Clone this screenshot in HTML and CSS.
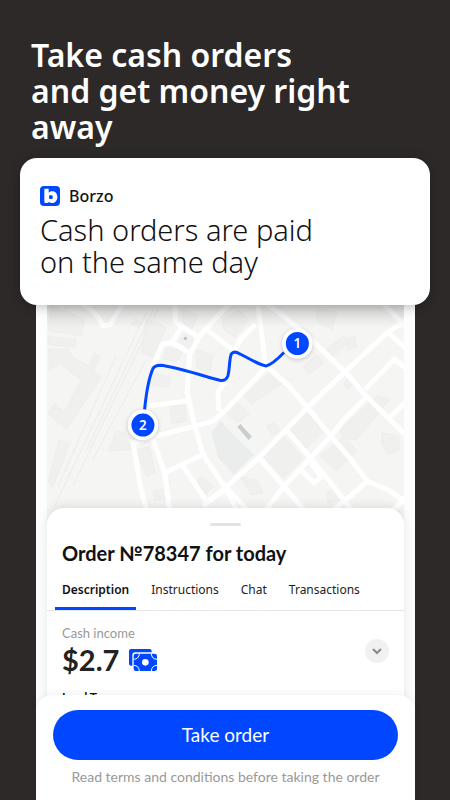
FILE: index.html
```
<!DOCTYPE html>
<html lang="en">
<head>
    <meta charset="UTF-8">
    <meta name="viewport" content="width=device-width, initial-scale=1.0">
    <title>Borzo</title>
    <link rel="stylesheet" href="styles.css">
</head>
<body>
<h1 class="headline">Take cash orders<br>and get money right<br>away</h1>

<section class="notice">
    <div class="notice-brand">
        <svg class="logo" viewBox="0 0 60 60" aria-hidden="true">
            <rect width="60" height="60" rx="12" fill="#0047ff"/>
            <path d="M13 8h13v12c3-3 7-4 11-4 9 0 15 7 15 17s-6 18-15 18c-4 0-7-1-10-4-2 3-5 4-9 4-3 0-5-1-5-4z" fill="#fff"/>
            <rect x="27" y="28" width="11" height="11" rx="3" fill="#0047ff"/>
        </svg>
        <span>Borzo</span>
    </div>
    <p class="notice-text">Cash orders are paid<br>on the same day</p>
</section>

<main class="phone">
    <svg class="map" viewBox="33 -45 1068 705" role="img" aria-label="Route from point 1 to point 2">
        <defs>
            <linearGradient id="shade" x1="0" y1="0" x2="0" y2="1">
                <stop offset="0" stop-color="#000" stop-opacity=".14"/>
                <stop offset="1" stop-color="#000" stop-opacity="0"/>
            </linearGradient>
        </defs>
        <rect x="33" y="-45" width="1068" height="705" fill="#f5f5f4"/>
        <!-- park -->
        <path d="M525 400l27-35 100 100-60 60-47-50z" fill="#eaedec"/>
        <!-- buildings -->
        <g fill="#f0f0ef" stroke="#ebebea" stroke-width="2">
            <path d="M45 20l100 40-8 50-100-16z"/>
            <path d="M36 112l84 8-4 24-80-8z"/>
            <path d="M36 150l60 0 10 20 50 30 20-40 16 14-20 40 24 20-106 156-55-48 20-30 30 26 50-96-64-50-30 20z"/>
            <path d="M330 60l60 24-40 90-36-12zM295 60l22 12-10 14-22-12z"/>
            <path d="M390 145l50 10-20 34-40-10zM480 150l50 20-10 50-40-14zM345 220l60 14-10 30-56-8zM400 320l44-4 8 50-44 8z"/>
            <path d="M300 450l40-10 16 80-26 10zM70 420l30 14-50 130-14-20zM240 395l26 6 20 50-70 4zM350 575l30-6 6 30-32 2zM490 530l40 30-20 24-30-30zM440 30l44 20-18 40-26-20z"/>
            <path d="M560 60l50-26 26 30-40 50-36-24zM840 30l60 10-14 50-44-20zM870 150l50-40 16 20-50 44zM925 120l30-10 4 34-26 8z"/>
            <path d="M570 340l34-30 34 34-34 26zM620 290l80-70 34 34-90 60zM800 200l40-34 22 24-46 36z"/>
            <path d="M690 380l20-10 20 24-22 14zM760 390l50-50 50 56-50 50zM680 470l60-60 60 66-60 60zM850 470l70-60 40 44-60 60z"/>
            <path d="M910 390l110-100 40 10-100 120-44-4zM1035 400l50 10 4 40-34 16-20-30zM610 530l50 10 20 40-36 6zM870 580l34-14 10 34-40 10zM920 250l20-14 14 20-22 14z"/>
        </g>
        <path d="M240 170L66 560M330 40L56 620M365 30L110 560M330 180L170 480M352 30l-200 420" fill="none" stroke="#ececeb" stroke-width="3"/>
        <path d="M602 382l10-8 34 38-10 10z" fill="#c9cecf"/>
        <path d="M435 105l30 0 12 32-24 18-32-12z" fill="#f0f1f0"/>
        <circle cx="447" cy="118" r="5" fill="#bcc4c8"/>
        <!-- streets -->
        <g class="streets">
            <path d="M90 -10Q180 25 200 80L222 76 262 10"/>
            <path d="M415 -10L418 70 480 110M435 85L408 130 378 135 350 200M408 130L458 160"/>
            <path d="M600 -10L490 110 460 165 452 280 475 380 500 465 570 570 610 650M510 90L592 155"/>
            <path d="M335 320L452 305M290 430L360 410 475 380 530 365 570 330 687 205M575 230L545 280 547 335"/>
            <path d="M290 425L310 550 335 650M350 420L385 520 402 650M385 520L500 465M440 500L510 605 570 570"/>
            <path d="M660 -10L672 80 687 200M660 -10L752 60 822 120 927 220 987 290 1110 410"/>
            <path d="M657 75L612 120 592 160M687 200L752 255 812 325 882 410 942 480 992 545 1052 570 1110 610"/>
            <path d="M1110 60L1052 100 927 215 812 325 662 480 572 560 500 620M1020 -5L1110 85M1052 100L1110 150M985 270L1072 180 1110 210"/>
            <path d="M992 290L922 360 882 410 817 480 742 560 680 640M1052 360L1110 305M752 395L817 470 882 550 950 640"/>
            <path d="M672 480L742 560 810 640M552 545L640 640M792 510L832 550 854 532 822 490M992 545L880 640M1110 590L1060 640"/>
        </g>
        <rect x="33" y="15" width="1068" height="70" fill="url(#shade)"/>
        <path class="route" d="M325 330C330 280 340 230 350 208Q356 198 372 198C420 202 490 228 550 243Q568 246 574 230C580 210 578 180 584 165Q590 156 602 160C630 172 660 195 688 200Q705 198 742 160"/>
        <g class="pin">
            <circle cx="782" cy="133" r="40"/>
            <text x="782" y="147">1</text>
        </g>
        <g class="pin">
            <circle cx="320" cy="377" r="40"/>
            <text x="320" y="391">2</text>
        </g>
    </svg>

    <section class="sheet">
        <div class="handle"></div>
        <h2 class="order-title">Order №78347 for today</h2>
        <nav class="tabs">
            <a class="tab active" href="#description">Description</a>
            <a class="tab" href="#instructions">Instructions</a>
            <a class="tab" href="#chat">Chat</a>
            <a class="tab" href="#transactions">Transactions</a>
        </nav>
        <div class="income" id="description">
            <div>
                <div class="income-label">Cash income</div>
                <div class="income-value">
                    <span>$2.7</span>
                    <svg class="cash" viewBox="0 0 84 66" aria-hidden="true">
                        <path d="M6 0h56a6 6 0 0 1 6 6v4H18a8 8 0 0 0-8 8v32H6a6 6 0 0 1-6-6V6a6 6 0 0 1 6-6z" fill="#0047ff"/>
                        <rect x="14" y="14" width="70" height="52" rx="7" fill="#0047ff"/>
                        <circle cx="49" cy="40" r="10" fill="#fff"/>
                        <path d="M14 31c10 0 17-7 17-17M84 31c-10 0-17-7-17-17M14 49c10 0 17 7 17 17M84 49c-10 0-17 7-17 17" fill="none" stroke="#fff" stroke-width="3"/>
                    </svg>
                </div>
            </div>
            <button class="expand" type="button" aria-label="Show details">
                <svg viewBox="0 0 24 24" aria-hidden="true"><path d="M8 10l4 4 4-4"/></svg>
            </button>
        </div>
        <div class="next-row">Lead T</div>
    </section>

    <footer class="action">
        <button class="take" type="button">Take order</button>
        <p class="terms">Read terms and conditions before taking the order</p>
    </footer>
</main>
</body>
</html>
```

FILE: styles.css
```
* {
    box-sizing: border-box;
}
body {
    display: flex;
    flex-direction: column;
    min-height: 100vh;
    margin: 0;
    padding-top: 37px;
    background-color: #2d2929;
    color: #111;
    font-family: Lato, "Noto Sans", sans-serif;
}
h1, h2, p {
    margin: 0;
}
.headline {
    padding: 0 31px;
    color: #fff;
    font-family: "Noto Sans", sans-serif;
    font-size: 32px;
    line-height: 36px;
    font-weight: 600;
}
.notice {
    position: relative;
    z-index: 1;
    margin: 13px 20px 0;
    padding: 27px 20px;
    border-radius: 17px;
    background-color: #fff;
    box-shadow: 0 2px 12px rgba(0, 0, 0, 0.25);
}
.notice-brand {
    display: flex;
    align-items: center;
    gap: 9px;
    height: 21px;
    font-family: "Noto Sans", sans-serif;
    font-size: 16px;
    font-weight: 500;
}
.logo {
    width: 20px;
    height: 20px;
}
.notice-text {
    margin-top: 8px;
    font-family: "Noto Sans", sans-serif;
    font-size: 29px;
    line-height: 32px;
    font-weight: 300;
}
.phone {
    display: flex;
    flex: 1;
    flex-direction: column;
    margin: -21px 35px 0 36px;
    background-color: #fdfdfd;
}
.map {
    display: block;
    margin: 0 11px;
}
.streets {
    fill: none;
    stroke: #fff;
    stroke-width: 15;
    stroke-linejoin: round;
}
.route {
    fill: none;
    stroke: #0047ff;
    stroke-width: 9;
}
.pin circle {
    fill: #0047ff;
    stroke: #fff;
    stroke-width: 11;
    filter: drop-shadow(0 3px 6px rgba(0, 0, 0, 0.2));
}
.pin text {
    fill: #fff;
    font-family: "Noto Sans", sans-serif;
    font-size: 40px;
    font-weight: 600;
    text-anchor: middle;
}
.sheet {
    position: relative;
    margin: -12px 11px 0;
    border-radius: 17px 17px 0 0;
    background-color: #fff;
    box-shadow: 0 -2px 10px rgba(0, 0, 0, 0.1);
}
.handle {
    width: 31px;
    height: 3px;
    margin: 0 auto;
    border-radius: 2px;
    background-color: #e3e3e3;
    transform: translateY(15px);
}
.order-title {
    padding: 28px 15px 0;
    font-size: 20px;
    line-height: 28px;
    font-weight: 700;
}
.tabs {
    display: flex;
    margin-top: 12px;
    padding: 0 8px;
    gap: 8px;
    border-bottom: 1px solid #e5e5e5;
}
.tab {
    height: 31px;
    padding: 0 7px;
    color: #222;
    font-family: "Noto Sans", sans-serif;
    font-size: 12px;
    line-height: 22px;
    text-decoration: none;
}
.tab.active {
    border-bottom: 3px solid #0047ff;
    color: #111;
    font-weight: 600;
}
.income {
    display: flex;
    align-items: center;
    justify-content: space-between;
    padding: 13px 15px 11px;
}
.income-label {
    color: #999;
    font-size: 13px;
    line-height: 18px;
}
.income-value {
    display: flex;
    align-items: center;
    gap: 10px;
    color: #222;
    font-size: 29px;
    line-height: 36px;
    font-weight: 700;
}
.cash {
    width: 28px;
    height: 22px;
}
.expand {
    width: 24px;
    height: 24px;
    padding: 0;
    border: 0;
    border-radius: 50%;
    background-color: #f1f1f1;
}
.expand svg {
    display: block;
    fill: none;
    stroke: #888;
    stroke-width: 2;
}
.next-row {
    height: 14px;
    padding: 0 15px;
    overflow: hidden;
    font-size: 12px;
    line-height: 16px;
    font-weight: 700;
}
.action {
    position: relative;
    flex: 1;
    margin-top: -8px;
    padding: 15px 17px 8px;
    border-radius: 17px 17px 0 0;
    background-color: #fff;
    box-shadow: 0 -2px 8px rgba(0, 0, 0, 0.05);
    text-align: center;
}
.take {
    width: 100%;
    height: 50px;
    border: 0;
    border-radius: 25px;
    background-color: #0047ff;
    color: #fff;
    font-family: inherit;
    font-size: 19px;
}
.terms {
    margin-top: 8px;
    color: #999;
    font-size: 14px;
    line-height: 18px;
}
```
